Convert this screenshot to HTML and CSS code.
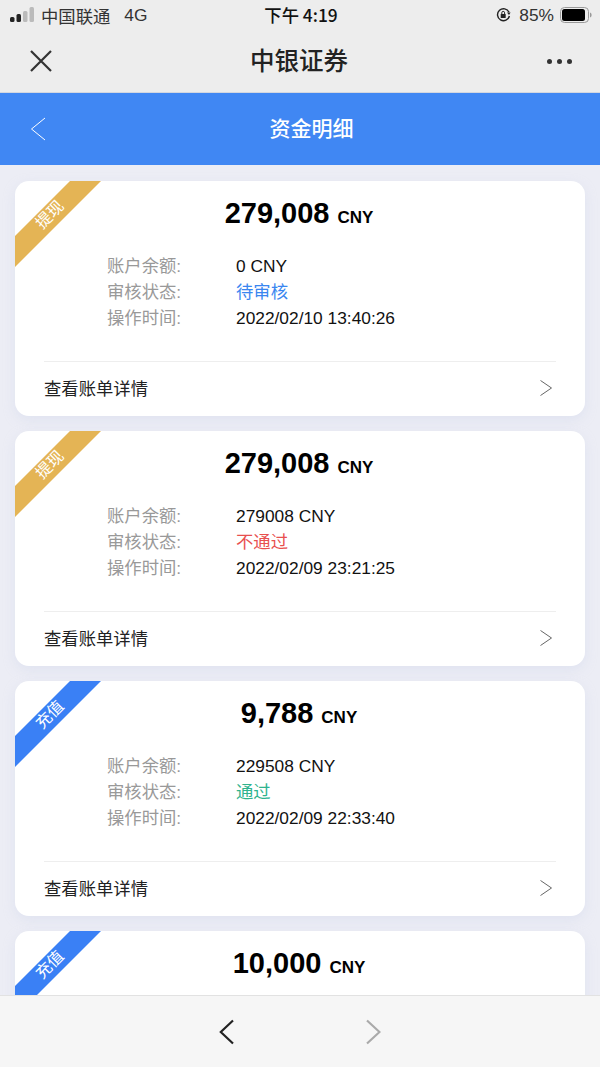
FILE: index.html
```html
<!DOCTYPE html>
<html lang="zh-CN">
<head>
  <meta charset="UTF-8">
  <meta name="viewport" content="width=device-width, initial-scale=1.0">
  <title>资金明细</title>
  <link rel="stylesheet" href="styles.css">
</head>
<body>
  <div class="app">
    <div class="status-bar">
      <div class="status-left">
        <svg class="signal" width="24" height="16" viewBox="0 0 24 16">
          <rect x="0" y="10" width="4.5" height="5" rx="1.5" fill="#222"/>
          <rect x="6.5" y="7" width="4.5" height="8" rx="1.5" fill="#222"/>
          <rect x="13" y="4" width="4.5" height="11" rx="1.5" fill="#bbb"/>
          <rect x="19.5" y="0" width="4.5" height="15" rx="1.5" fill="#bbb"/>
        </svg>
        <span>中国联通</span>
        <span class="net">4G</span>
      </div>
      <div class="status-time">下午 4:19</div>
      <div class="status-right">
        <svg class="rotation-lock" width="15" height="16" viewBox="0 0 15 16">
          <path d="M13 5.2A6 6 0 1 0 13.4 9" fill="none" stroke="#222" stroke-width="1.4"/>
          <path d="M11 5.5h3.6l-1.6 2.6z" fill="#222"/>
          <rect x="4.7" y="7" width="5" height="4" rx="0.6" fill="#222"/>
          <path d="M5.8 7V5.8a1.4 1.4 0 0 1 2.8 0V7" fill="none" stroke="#222" stroke-width="1"/>
        </svg>
        <span>85%</span>
        <svg width="32" height="16" viewBox="0 0 32 16">
          <rect x="0.5" y="0.5" width="28" height="15" rx="4" fill="none" stroke="#999"/>
          <rect x="2" y="2" width="23" height="12" rx="2.5" fill="#000"/>
          <path d="M30 5.5c1.2.4 1.6 1.3 1.6 2.5s-.4 2.1-1.6 2.5z" fill="#999"/>
        </svg>
      </div>
    </div>

    <div class="nav-bar">
      <svg class="nav-close" width="24" height="24" viewBox="0 0 24 24">
        <path d="M2 2l20 20M22 2L2 22" fill="none" stroke="#333" stroke-width="2.2"/>
      </svg>
      <div class="nav-title">中银证券</div>
      <div class="nav-more"><i></i><i></i><i></i></div>
    </div>

    <div class="page-header">
      <svg class="header-back" width="16" height="24" viewBox="0 0 16 24">
        <path d="M15 1L1.5 12L15 23" fill="none" stroke="#fff" stroke-width="1"/>
      </svg>
      <div class="header-title">资金明细</div>
      <div></div>
    </div>

    <div class="list">
      <div class="card">
        <div class="ribbon ribbon-gold"><span>提现</span></div>
        <div class="amount">279,008<small>CNY</small></div>
        <div class="rows">
          <div class="row"><span class="label">账户余额:</span><span>0 CNY</span></div>
          <div class="row"><span class="label">审核状态:</span><span class="st-blue">待审核</span></div>
          <div class="row"><span class="label">操作时间:</span><span>2022/02/10 13:40:26</span></div>
        </div>
        <div class="detail">
          <span>查看账单详情</span>
          <svg width="12" height="16" viewBox="0 0 12 16"><path d="M.5.5L11.5 8L.5 15.5" fill="none" stroke="#666" stroke-width="1"/></svg>
        </div>
      </div>

      <div class="card">
        <div class="ribbon ribbon-gold"><span>提现</span></div>
        <div class="amount">279,008<small>CNY</small></div>
        <div class="rows">
          <div class="row"><span class="label">账户余额:</span><span>279008 CNY</span></div>
          <div class="row"><span class="label">审核状态:</span><span class="st-red">不通过</span></div>
          <div class="row"><span class="label">操作时间:</span><span>2022/02/09 23:21:25</span></div>
        </div>
        <div class="detail">
          <span>查看账单详情</span>
          <svg width="12" height="16" viewBox="0 0 12 16"><path d="M.5.5L11.5 8L.5 15.5" fill="none" stroke="#666" stroke-width="1"/></svg>
        </div>
      </div>

      <div class="card">
        <div class="ribbon ribbon-blue"><span>充值</span></div>
        <div class="amount">9,788<small>CNY</small></div>
        <div class="rows">
          <div class="row"><span class="label">账户余额:</span><span>229508 CNY</span></div>
          <div class="row"><span class="label">审核状态:</span><span class="st-green">通过</span></div>
          <div class="row"><span class="label">操作时间:</span><span>2022/02/09 22:33:40</span></div>
        </div>
        <div class="detail">
          <span>查看账单详情</span>
          <svg width="12" height="16" viewBox="0 0 12 16"><path d="M.5.5L11.5 8L.5 15.5" fill="none" stroke="#666" stroke-width="1"/></svg>
        </div>
      </div>

      <div class="card">
        <div class="ribbon ribbon-blue"><span>充值</span></div>
        <div class="amount">10,000<small>CNY</small></div>
      </div>
    </div>

    <div class="toolbar">
      <svg width="16" height="26" viewBox="0 0 16 26"><path d="M14 1.5L1.8 13L14 24.5" fill="none" stroke="#222" stroke-width="2.2"/></svg>
      <svg width="16" height="26" viewBox="0 0 16 26"><path d="M2 1.5L14.5 13L2 24.5" fill="none" stroke="#aaa" stroke-width="2.2"/></svg>
    </div>
  </div>
</body>
</html>
```

FILE: styles.css
```css
* {
  box-sizing: border-box;
}

body {
  margin: 0;
  background: #ecedf5;
  font-family: "Liberation Sans", "Noto Sans CJK SC", sans-serif;
  color: #111;
  overflow: hidden;
}

.app {
  display: flex;
  flex-direction: column;
  height: 100vh;
  overflow: hidden;
}

/* phone status bar */
.status-bar {
  flex: none;
  display: grid;
  grid-template-columns: 1fr auto 1fr;
  align-items: center;
  height: 30px;
  padding: 0 8px 0 10px;
  background: #ededed;
  font-size: 17.33px;
  color: #333;
}

.status-left {
  display: flex;
  align-items: center;
  gap: 7px;
}

.net {
  margin-left: 7px;
}

.status-time {
  font-family: "Noto Sans CJK SC", sans-serif;
  font-weight: 500;
  font-size: 17.33px;
  line-height: 24px;
  color: #111;
}

.status-right {
  display: flex;
  align-items: center;
  justify-content: flex-end;
  gap: 6px;
}

.rotation-lock {
  margin-right: 2px;
}

/* app nav bar */
.nav-bar {
  flex: none;
  display: grid;
  grid-template-columns: 1fr auto 1fr;
  align-items: center;
  height: 63px;
  padding: 0 28px 0 29px;
  background: #ededed;
  border-bottom: 1px solid #d3d7e0;
}

.nav-title {
  margin-right: 3px;
  padding-bottom: 4px;
  font-size: 24.5px;
  font-weight: 500;
  color: #222;
}

.nav-more {
  display: flex;
  justify-content: flex-end;
  gap: 5px;
}

.nav-more i {
  width: 5px;
  height: 5px;
  border-radius: 50%;
  background: #333;
}

.page-header {
  flex: none;
  display: grid;
  grid-template-columns: 1fr auto 1fr;
  align-items: center;
  height: 72px;
  padding: 0 30px;
  background: #4087f3;
}

.header-title {
  margin-left: 23px;
  padding-bottom: 4px;
  font-size: 21px;
  font-weight: 500;
  color: #fff;
}

/* list */
.list {
  flex: 1;
  min-height: 0;
  overflow: hidden;
  display: flex;
  flex-direction: column;
  gap: 15px;
  padding: 16px 15px 0;
}

.card {
  position: relative;
  flex: none;
  height: 235px;
  background: #fff;
  border-radius: 14px;
  box-shadow: 0 4px 12px rgba(200, 208, 232, 0.35);
  overflow: hidden;
}

.ribbon {
  position: absolute;
  left: 0;
  top: 0;
  width: 86px;
  height: 86px;
  clip-path: polygon(55px 0, 86px 0, 0 86px, 0 55px);
}

.ribbon span {
  position: absolute;
  left: 0;
  top: 22px;
  width: 70px;
  text-align: center;
  font-size: 16px;
  line-height: 24px;
  color: #fff;
  transform: rotate(-45deg);
}

.ribbon-gold {
  background: #e4b455;
}

.ribbon-blue {
  background: #3a80f5;
}

.amount {
  height: 72px;
  padding: 14px 2px 0 0;
  text-align: center;
  font-size: 29px;
  line-height: 36px;
  font-weight: bold;
  color: #000;
}

.amount small {
  margin-left: 8px;
  font-size: 17px;
}

.rows {
  padding: 0 0 30px 92px;
  font-size: 17.33px;
  line-height: 26px;
}

.row {
  display: flex;
  height: 26px;
}

.label {
  width: 129px;
  color: #999;
}

.st-blue {
  color: #3a86f0;
}

.st-red {
  color: #e8504f;
}

.st-green {
  color: #2fb38e;
}

.detail {
  display: flex;
  align-items: center;
  justify-content: space-between;
  height: 55px;
  margin: 0 29px;
  padding: 0 4px 2px 0;
  border-top: 1px solid #eee;
  font-size: 17.33px;
  color: #222;
}

.detail span {
  margin-bottom: 2px;
}

.toolbar {
  flex: none;
  display: flex;
  justify-content: center;
  align-items: center;
  gap: 130px;
  height: 72px;
  background: #f6f6f6;
  border-top: 1px solid #e2e2e2;
}
```
